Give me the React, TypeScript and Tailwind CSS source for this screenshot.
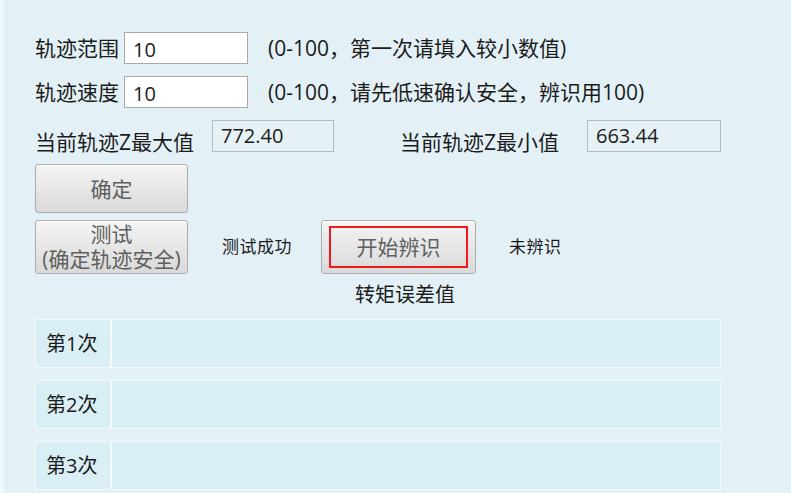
import React from "react";

const font = { fontFamily: '"Open Sans","Noto Sans CJK SC",sans-serif' };

function GrayButton({ children, className = "" }: { children: React.ReactNode; className?: string }) {
  return (
    <div
      className={`flex flex-col items-center justify-center rounded-[3px] border border-[#a9adb0] bg-gradient-to-b from-[#f4f4f4] to-[#d9d9d9] text-[21px] leading-[24px] text-[#5f5f5f] shadow-[inset_0_1px_0_#ffffff] ${className}`}
    >
      {children}
    </div>
  );
}

export default function App() {
  const rows = ["第1次", "第2次", "第3次"];

  return (
    <div className="flex h-[493px] w-[791px] overflow-hidden bg-[#e3f1f7] text-[#1b1b1b]" style={font}>
      <div className="w-[4px] shrink-0 bg-[#eef7fb]" />
      <div className="flex flex-1 flex-col pl-[31px] pt-[32px]">
        {/* 轨迹范围 */}
        <div className="flex h-[32px] items-center">
          <span className="w-[89px] text-[21px] leading-none">轨迹范围</span>
          <div className="flex h-[32px] w-[124px] items-center border border-[#a9a9a9] bg-white pl-[8px] pt-[3px] text-[20px]">10</div>
          <span className="ml-[20px] text-[21px] leading-none">(0-100，第一次请填入较小数值)</span>
        </div>
        {/* 轨迹速度 */}
        <div className="mt-[12px] flex h-[32px] items-center">
          <span className="w-[89px] text-[21px] leading-none">轨迹速度</span>
          <div className="flex h-[32px] w-[124px] items-center border border-[#a9a9a9] bg-white pl-[8px] pt-[3px] text-[20px]">10</div>
          <span className="ml-[20px] text-[21px] leading-none">(0-100，请先低速确认安全，辨识用100)</span>
        </div>
        {/* Z 值 */}
        <div className="mt-[12px] flex h-[32px] items-center">
          <span className="w-[177px] pt-[12px] text-[21px] leading-none">当前轨迹Z最大值</span>
          <div className="flex h-[32px] w-[122px] items-center border border-[#b5babd] bg-[#e6f1f5] pl-[8px] text-[20px]">772.40</div>
          <span className="ml-[66px] w-[187px] pt-[12px] text-[21px] leading-none">当前轨迹Z最小值</span>
          <div className="flex h-[32px] w-[134px] items-center border border-[#b5babd] bg-[#e6f1f5] pl-[8px] text-[20px]">663.44</div>
        </div>
        {/* 确定 */}
        <GrayButton className="mt-[12px] h-[49px] w-[153px]">确定</GrayButton>
        {/* 测试 / 辨识 */}
        <div className="mt-[7px] flex h-[54px] items-center">
          <GrayButton className="h-[54px] w-[153px]">
            <span className="leading-[25px]">测试</span>
            <span className="leading-[25px]">(确定轨迹安全)</span>
          </GrayButton>
          <span className="ml-[34px] text-[17px] tracking-[0.5px]">测试成功</span>
          <GrayButton className="ml-[29px] h-[54px] w-[155px]">
            <div className="flex h-[42px] w-[139px] items-center justify-center border-2 border-[#f01a1a]">开始辨识</div>
          </GrayButton>
          <span className="ml-[33px] text-[17px] tracking-[0.5px]">未辨识</span>
        </div>
        <div className="ml-[320px] mt-[9px] text-[20px] leading-[24px]">转矩误差值</div>
        {/* 结果表 */}
        <div className="mt-[12px] flex flex-col gap-[12px]">
          {rows.map((r) => (
            <div key={r} className="flex h-[49px] w-[686px] border border-[#f4fafc] bg-[#d9eff5]">
              <div className="flex w-[76px] items-center border-r-2 border-[#f4fafc] pl-[10px] text-[20px]">{r}</div>
              <div className="flex-1" />
            </div>
          ))}
        </div>
      </div>
    </div>
  );
}
